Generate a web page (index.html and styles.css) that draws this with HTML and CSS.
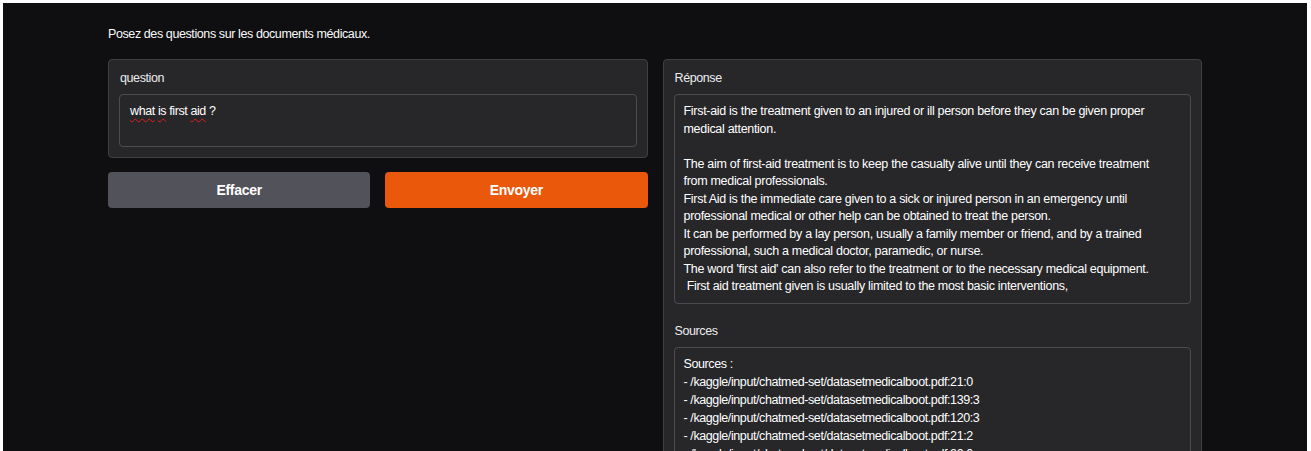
FILE: index.html
```html
<!DOCTYPE html>
<html lang="fr">
<head>
<meta charset="utf-8">
<title>Chat médical</title>
<link rel="stylesheet" href="styles.css">
</head>
<body>
<div class="app">
  <div class="container">
    <p class="intro">Posez des questions sur les documents médicaux.</p>
    <div class="row">
      <div class="col">
        <div class="panel">
          <div class="label">question</div>
          <div class="input"><span class="sp">what</span> <span class="sp">is</span> first <span class="sp">aid</span> ?</div>
        </div>
        <div class="buttons">
          <button class="btn btn-secondary">Effacer</button>
          <button class="btn btn-primary">Envoyer</button>
        </div>
      </div>
      <div class="col">
        <div class="panel panel-tall">
          <div class="label">Réponse</div>
          <div class="output answer">First-aid is the treatment given to an injured or ill person before they can be given proper
medical attention.

The aim of first-aid treatment is to keep the casualty alive until they can receive treatment
from medical professionals.
First Aid is the immediate care given to a sick or injured person in an emergency until
professional medical or other help can be obtained to treat the person.
It can be performed by a lay person, usually a family member or friend, and by a trained
professional, such a medical doctor, paramedic, or nurse.
The word 'first aid' can also refer to the treatment or to the necessary medical equipment.
 First aid treatment given is usually limited to the most basic interventions,</div>
          <div class="label label-gap">Sources</div>
          <div class="output sources">Sources :
- /kaggle/input/chatmed-set/datasetmedicalboot.pdf:21:0
- /kaggle/input/chatmed-set/datasetmedicalboot.pdf:139:3
- /kaggle/input/chatmed-set/datasetmedicalboot.pdf:120:3
- /kaggle/input/chatmed-set/datasetmedicalboot.pdf:21:2
- /kaggle/input/chatmed-set/datasetmedicalboot.pdf:20:0</div>
        </div>
      </div>
    </div>
  </div>
</div>
</body>
</html>
```

FILE: styles.css
```css
html, body {
  margin: 0;
  padding: 0;
  background: #ffffff;
  overflow: hidden;
  height: 100%;
}

body {
  font-family: "Liberation Sans", Arial, sans-serif;
  font-size: 12.5px;
  letter-spacing: -0.4px;
  color: #ffffff;
}

.app {
  margin: 3px 4px 0 3px;
  background: #0f0f11;
  height: calc(100% - 3px);
}

.container {
  width: 1094px;
  margin: 0 auto;
  padding-top: 21px;
}

.intro {
  margin: 0 0 15px 0;
  line-height: 20px;
  color: #fafafa;
}

.row {
  display: flex;
  gap: 15px;
  align-items: flex-start;
}

.col {
  flex: 1 1 0;
  min-width: 0;
  display: flex;
  flex-direction: column;
}

.panel {
  background: #27272a;
  border: 1px solid #3f3f46;
  border-radius: 4px;
  padding: 10px;
}

.panel-tall {
  height: 420px;
}

.label {
  line-height: 14px;
  margin: 1px 0 9px 1px;
  color: #ececef;
}

.label-gap {
  margin-top: 20px;
}

.input {
  height: 53px;
  box-sizing: border-box;
  border: 1px solid #4b4b52;
  border-radius: 4px;
  background: #27272a;
  padding: 8px 10px;
  line-height: 17.5px;
  color: #ffffff;
}

.sp {
  text-decoration: underline wavy #e0201a;
  text-decoration-thickness: 1px;
  text-underline-offset: 3px;
}

.output {
  border: 1px solid #4b4b52;
  border-radius: 4px;
  background: #27272a;
  padding: 8px 9px 7px 9px;
  line-height: 17.5px;
  white-space: pre;
  overflow: hidden;
}

.answer {
  letter-spacing: -0.3px;
}

.sources {
  line-height: 18px;
  padding-top: 7px;
  height: 200px;
}

.buttons {
  display: flex;
  gap: 15px;
  margin-top: 14px;
}

.btn {
  flex: 1 1 0;
  height: 36px;
  border: none;
  border-radius: 4px;
  font-family: inherit;
  font-size: 14px;
  letter-spacing: -0.3px;
  font-weight: 700;
  color: #ffffff;
  cursor: pointer;
}

.btn-secondary {
  background: #52525b;
}

.btn-primary {
  background: #ea580c;
}
```
